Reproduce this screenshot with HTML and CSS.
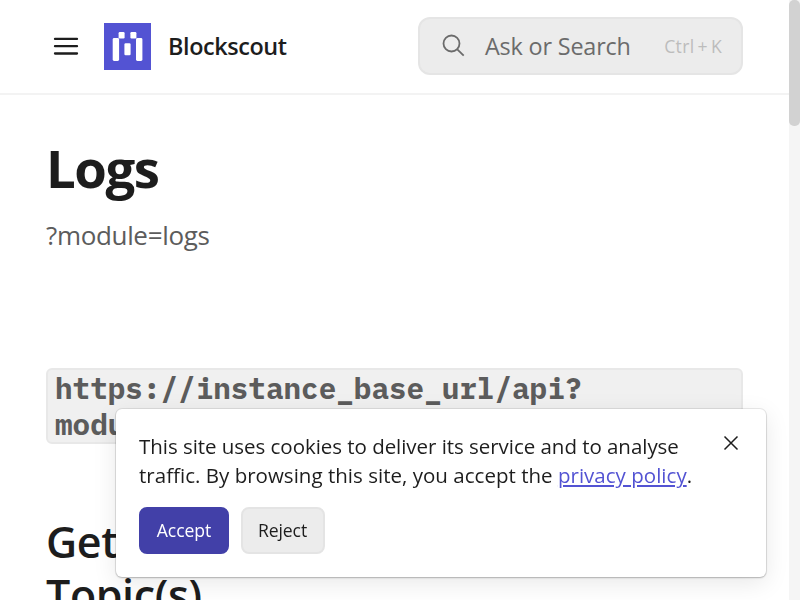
FILE: index.html
```html
<!DOCTYPE html>
<html lang="en">
<head>
<meta charset="utf-8">
<title>Logs | Blockscout</title>
<link rel="stylesheet" href="styles.css">
</head>
<body>
<div class="page">
  <header class="header">
    <svg class="menu" viewBox="0 0 26 20" aria-hidden="true"><path d="M2 2.9h22M2 10.2h22M2 17.5h22"/></svg>
    <svg class="logo" viewBox="0 0 47 47" aria-hidden="true">
      <rect width="47" height="47" fill="#5353d3"/>
      <g fill="#fff"><rect x="14.6" y="9.1" width="6" height="6.4" rx="1.2"/><rect x="26.4" y="9.1" width="6" height="6.4" rx="1.2"/><rect x="8.7" y="15" width="6.4" height="23" rx="1.4"/><rect x="32" y="15" width="6.4" height="23" rx="1.4"/><rect x="20.4" y="20.3" width="6.2" height="12" rx="1.2"/></g>
    </svg>
    <span class="brand">Blockscout</span>
    <div class="search">
      <svg class="lens" viewBox="0 0 24 24" aria-hidden="true"><circle cx="9.5" cy="9.5" r="8"/><path d="M15.3 15.3l6.4 6.4"/></svg>
      <span class="prompt">Ask or Search</span>
      <span class="keys">Ctrl + K</span>
    </div>
  </header>
  <main class="content">
    <h1 class="title">Logs</h1>
    <p class="subtitle">?module=logs</p>
    <div class="code">https://instance_base_url/api?<br>module=logs</div>
    <h2 class="section">Get<br>Topic(s)</h2>
  </main>
</div>
<div class="track"><div class="thumb"></div></div>
<aside class="cookies">
  <p class="notice">This site uses cookies to deliver its service and to analyse<br><span class="notice-end">traffic. By browsing this site, you accept the <a class="link" href="#">privacy policy</a>.</span></p>
  <svg class="close" viewBox="0 0 16 16" aria-label="Close"><path d="M1.5 1.5l13 13M14.5 1.5l-13 13"/></svg>
  <div class="actions">
    <button class="button primary">Accept</button>
    <button class="button">Reject</button>
  </div>
</aside>
</body>
</html>
```
FILE: styles.css
```css
* { box-sizing: border-box; }
html, body { height: 100%; margin: 0; overflow: hidden; }
body {
  display: flex;
  background: #fff;
  color: #1d1d1d;
  font-family: "Open Sans", "Noto Sans", sans-serif;
}
.page { flex: 1; min-width: 0; height: 600px; overflow: hidden; }
.header {
  display: flex;
  align-items: center;
  height: 95px;
  padding: 0 46px 0 53px;
  border-bottom: 2px solid #f3f3f3;
}
.menu { width: 26px; height: 20px; margin-bottom: 1px; fill: none; stroke: #1d1d1d; stroke-width: 2.3; stroke-linecap: round; }
.logo { width: 47px; height: 47px; margin-left: 25px; }
.brand { margin: 0 0 2px 17px; font-size: 23.4px; font-weight: 600; letter-spacing: -.4px; white-space: nowrap; }
.search {
  display: flex;
  align-items: center;
  width: 325px;
  height: 58px;
  margin: 0 0 1px auto;
  padding: 0 19px 0 22px;
  border: 2px solid #e5e5e5;
  border-radius: 12px;
  background: #ececec;
  color: #6b6b6b;
  white-space: nowrap;
}
.lens { width: 24px; height: 24px; fill: none; stroke: #6b6b6b; stroke-width: 1.8; }
.prompt { margin-left: 19px; font-size: 23.4px; letter-spacing: -.18px; }
.keys { margin-left: auto; color: #bcbcbc; font-size: 17.6px; letter-spacing: .3px; word-spacing: -1.8px; }
.content { padding: 40px 46px 0; }
.title { margin: 0; font-size: 52.7px; line-height: 66px; letter-spacing: -1.5px; }
.subtitle { margin: 14px 0 0; color: #5c5c5c; font-size: 26px; line-height: 41px; letter-spacing: -.33px; }
.code {
  height: 76px;
  margin-top: 112px;
  padding: 0 7px;
  border: 2px solid #e8e8e8;
  border-radius: 6px;
  background: #f0f0f0;
  color: #5c5c5c;
  font: bold 29.3px/36px "IBM Plex Mono", "Liberation Mono", monospace;
}
.section { margin: 71px 0 0; font-size: 43px; font-weight: 600; line-height: 53px; letter-spacing: -.4px; }
.track { width: 11px; height: 600px; background: #f5f5f5; }
.thumb { height: 126px; border-radius: 5px; background: #d2d2d2; }
.cookies {
  position: fixed;
  left: 116px;
  top: 409px;
  width: 650px;
  height: 168px;
  padding: 23px;
  border-radius: 6px;
  background: #fff;
  box-shadow: 0 0 0 1px #00000014, 0 1px 2px #00000038, 0 6px 24px #00000018;
}
.notice { margin: 0; font-size: 20.5px; line-height: 29px; letter-spacing: -.04px; white-space: nowrap; }
.notice-end { letter-spacing: .02px; }
.link { color: #5353d3; text-decoration-thickness: 2px; text-underline-offset: 2px; }
.close { position: absolute; top: 26px; right: 27px; width: 16px; height: 16px; fill: none; stroke: #1d1d1d; stroke-width: 1.5; }
.actions { display: flex; gap: 12px; margin-top: 17px; }
.button {
  width: 84px;
  height: 47px;
  padding: 0 1px 1px 0;
  border: 2px solid #e4e4e4;
  border-radius: 8px;
  background: #ececec;
  color: #1d1d1d;
  font: 17.6px "Open Sans", sans-serif;
  letter-spacing: -.1px;
}
.primary { width: 90px; padding-right: 0; border-color: #4240a8; background: #4240a8; color: #fff; }
```
